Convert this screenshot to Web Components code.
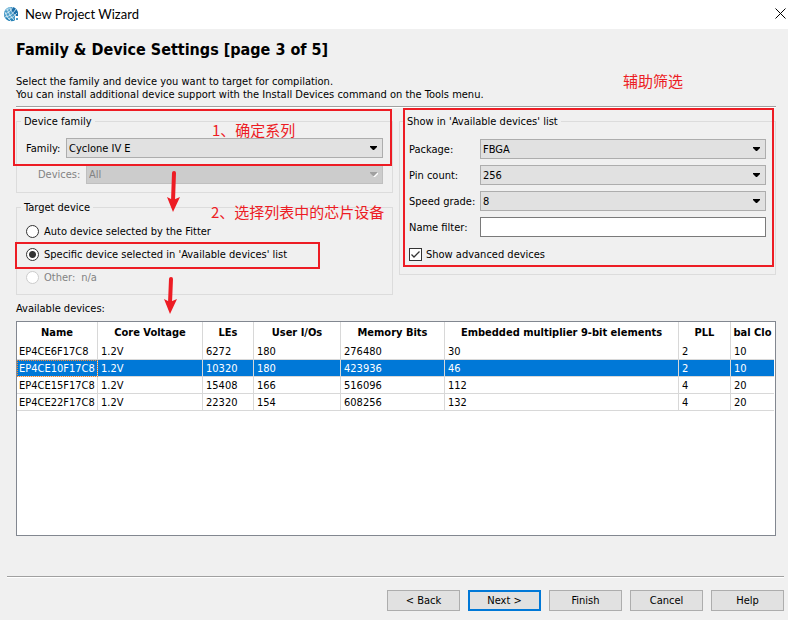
<!DOCTYPE html>
<html lang="en">
<head>
<meta charset="utf-8">
<title>New Project Wizard</title>
<style>
  body {
    margin: 0;
    color: #000;
    background: #f0f0f0;
    font-family: "DejaVu Sans Condensed", "DejaVu Sans", "Noto Sans CJK SC", sans-serif;
    font-size: 11px;
    line-height: 13px;
  }
  .family { --pad-top: 10px; --pad-bottom: 8px; }
  .target { --pad-top: 6px; --pad-bottom: 5px; }
  .filters { --pad-top: 11px; --pad-bottom: 13px; --label-width: 71px; }
  .family-field { --label-width: 40px; }
  .devices-field { --label-width: 48px; margin-left: 12px; }
</style>
</head>
<body>

<wizard-window>
  <title-bar slot="title">New Project Wizard</title-bar>
  <page-header slot="header" heading="Family &amp; Device Settings [page 3 of 5]">
    Select the family and device you want to target for compilation.<br>
    You can install additional device support with the Install Devices command on the Tools menu.
  </page-header>

  <settings-columns>
    <group-box slot="left" legend="Device family" class="family">
      <select-field label="Family:" value="Cyclone IV E" class="family-field"></select-field>
      <select-field label="Devices:" value="All" disabled class="devices-field"></select-field>
    </group-box>
    <group-box slot="left" legend="Target device" class="target">
      <device-choice></device-choice>
    </group-box>
    <group-box slot="right" legend="Show in 'Available devices' list" class="filters">
      <select-field label="Package:" value="FBGA"></select-field>
      <select-field label="Pin count:" value="256"></select-field>
      <select-field label="Speed grade:" value="8"></select-field>
      <text-field label="Name filter:"></text-field>
      <check-field label="Show advanced devices" checked></check-field>
    </group-box>
  </settings-columns>

  <device-table></device-table>
  <wizard-buttons slot="footer"></wizard-buttons>
  <note-layer slot="notes"></note-layer>
</wizard-window>

<script>
class WizardWindow extends HTMLElement {
  constructor() {
    super();
    this.attachShadow({ mode: 'open' });
    this.shadowRoot.innerHTML = `
      <style>
        :host {
          display: flex;
          flex-direction: column;
          position: relative;
          min-height: 100vh;
        }
        main {
          flex: 1;
          display: flex;
          flex-direction: column;
          gap: 7px;
          padding: 11px 12px 40px 16px;
        }
      </style>
      <slot name="title"></slot>
      <main>
        <slot name="header"></slot>
        <slot></slot>
      </main>
      <slot name="footer"></slot>
      <slot name="notes"></slot>
    `;
  }
}

class TitleBar extends HTMLElement {
  constructor() {
    super();
    this.attachShadow({ mode: 'open' });
    this.shadowRoot.innerHTML = `
      <style>
        :host {
          display: flex;
          align-items: center;
          gap: 6px;
          box-sizing: border-box;
          height: 29px;
          padding: 0 1px 2px 4px;
          background: #fff;
          font: 13px/16px Lato, "Noto Sans", sans-serif;
        }
        .text { flex: 1; }
        button {
          display: flex;
          padding: 0 1px;
          border: 0;
          background: none;
        }
      </style>
      <svg width="15" height="16" viewBox="0 0 15 16">
        <path d="M7 1 C11 1 14 4 14 8 L14 10 L11 10 L11 14 C10 15 8 15 7 15 C3 15 0 12 0 8 C0 4 3 1 7 1 Z" fill="#4a9cc9"/>
        <path d="M8 1 C11 1 14 4 14 8 L14 10 L10 10 L7 5 Z" fill="#1b6ea8"/>
        <path d="M0 9 C2 13 6 14 11 13 L11 14 C7 17 1 14 0 9 Z" fill="#2580b5"/>
        <path d="M1 5 Q3 1 7 1 L5 4 Z" fill="#8cc4e0"/>
        <path d="M3 3 Q5 9 10 14 M6 2 Q8 8 12 10 M1 6 Q3 12 7 15 M1 8 Q6 7 9 1 M1 11 Q8 10 12 3 M4 13 Q9 12 13 7" fill="none" stroke="#e2f1f8" stroke-width=".8"/>
        <path d="M12 12 H14 V14 H12 Z" fill="#4a9cc9"/>
      </svg>
      <span class="text"><slot></slot></span>
      <button aria-label="Close">
        <svg width="11" height="11" viewBox="0 0 11 11"><path d="M.5 .5 L10.5 10.5 M10.5 .5 L.5 10.5" stroke="#000" fill="none"/></svg>
      </button>
    `;
  }
}

class PageHeader extends HTMLElement {
  connectedCallback() {
    this.attachShadow({ mode: 'open' });
    this.shadowRoot.innerHTML = `
      <style>
        :host {
          display: block;
          border-bottom: 1px solid #fff;
        }
        h1 {
          margin: 0 0 15px;
          font-size: 16px;
          line-height: 20px;
        }
        p {
          margin: 0;
          padding-bottom: 5px;
          border-bottom: 1px solid #a0a0a0;
        }
      </style>
      <h1>${this.getAttribute('heading')}</h1>
      <p><slot></slot></p>
    `;
  }
}

class SettingsColumns extends HTMLElement {
  constructor() {
    super();
    this.attachShadow({ mode: 'open' });
    this.shadowRoot.innerHTML = `
      <style>
        :host {
          display: grid;
          grid-template-columns: 1fr 1fr;
          align-items: start;
          gap: 6px;
        }
        .column {
          display: flex;
          flex-direction: column;
          gap: 8px;
        }
      </style>
      <div class="column"><slot name="left"></slot></div>
      <div class="column"><slot name="right"></slot></div>
    `;
  }
}

class GroupBox extends HTMLElement {
  connectedCallback() {
    this.attachShadow({ mode: 'open' });
    this.shadowRoot.innerHTML = `
      <style>
        :host { display: block; }
        fieldset {
          min-width: 0;
          margin: 0;
          padding: var(--pad-top) 9px var(--pad-bottom);
          border: 1px solid #dcdcdc;
        }
        legend {
          margin-left: -5px;
          padding: 0 3px;
        }
        .content {
          display: flex;
          flex-direction: column;
          gap: 6px;
        }
      </style>
      <fieldset>
        <legend>${this.getAttribute('legend')}</legend>
        <div class="content"><slot></slot></div>
      </fieldset>
    `;
  }
}

class SelectField extends HTMLElement {
  connectedCallback() {
    const disabled = this.hasAttribute('disabled');
    this.attachShadow({ mode: 'open' });
    this.shadowRoot.innerHTML = `
      <style>
        :host {
          display: flex;
          align-items: center;
          height: 20px;
        }
        :host([disabled]) { color: #838383; }
        label { width: var(--label-width); }
        .box {
          flex: 1;
          display: grid;
          align-items: center;
        }
        select, svg { grid-area: 1 / 1; }
        select {
          appearance: none;
          width: 100%;
          height: 20px;
          padding: 0 20px 0 2px;
          border: 1px solid #adadad;
          border-radius: 0;
          color: inherit;
          background: #e1e1e1;
          font: inherit;
          opacity: 1;
        }
        select:disabled {
          border-color: #bfbfbf;
          background: #ccc;
        }
        svg {
          justify-self: end;
          margin-right: 5px;
          pointer-events: none;
        }
      </style>
      <label for="field">${this.getAttribute('label')}</label>
      <div class="box">
        <select id="field" ${disabled ? 'disabled' : ''}>
          <option>${this.getAttribute('value')}</option>
        </select>
        <svg width="8" height="5" viewBox="0 0 8 5">
          ${disabled ? '<path d="M1 1 H8 V2 L5 5 H4 Z" fill="#fff"/>' : ''}
          <path d="M0 0 H7 V1 L4 4 H3 L0 1 Z" fill="${disabled ? '#a0a0a0' : '#000'}"/>
        </svg>
      </div>
    `;
  }
}

class TextField extends HTMLElement {
  connectedCallback() {
    this.attachShadow({ mode: 'open' });
    this.shadowRoot.innerHTML = `
      <style>
        :host {
          display: flex;
          align-items: center;
          height: 20px;
        }
        label { width: var(--label-width); }
        input {
          flex: 1;
          box-sizing: border-box;
          min-width: 0;
          height: 20px;
          padding: 0 3px;
          border: 1px solid #7a7a7a;
          background: #fff;
          font: inherit;
        }
      </style>
      <label for="field">${this.getAttribute('label')}</label>
      <input id="field" type="text">
    `;
  }
}

class CheckField extends HTMLElement {
  connectedCallback() {
    this.attachShadow({ mode: 'open' });
    this.shadowRoot.innerHTML = `
      <style>
        :host {
          display: flex;
          padding-top: 5px;
        }
        label {
          display: flex;
          align-items: center;
          gap: 4px;
        }
        .box {
          display: grid;
        }
        input, svg { grid-area: 1 / 1; }
        input {
          appearance: none;
          width: 13px;
          height: 13px;
          margin: 0;
          border: 1px solid #333;
          background: #fff;
        }
        svg {
          visibility: hidden;
          pointer-events: none;
        }
        input:checked + svg { visibility: visible; }
      </style>
      <label>
        <span class="box">
          <input type="checkbox" ${this.hasAttribute('checked') ? 'checked' : ''}>
          <svg width="13" height="13" viewBox="0 0 13 13"><path d="M2.5 6.5 L5 9 L10.5 3.5" fill="none" stroke="#333" stroke-width="1.3"/></svg>
        </span>
        ${this.getAttribute('label')}
      </label>
    `;
  }
}

class DeviceChoice extends HTMLElement {
  constructor() {
    super();
    this.attachShadow({ mode: 'open' });
    this.shadowRoot.innerHTML = `
      <style>
        :host { display: block; }
        label {
          display: flex;
          align-items: center;
          gap: 5px;
          height: 23px;
        }
        label.off { color: #838383; }
        input {
          appearance: none;
          width: 13px;
          height: 13px;
          margin: 0;
          border: 1px solid #333;
          border-radius: 50%;
          background: #fff;
        }
        input:checked { background: radial-gradient(circle, #333 3px, #fff 4px); }
        input:disabled { border-color: #ccc; }
        .value { margin-left: 1px; }
      </style>
      <label><input type="radio" name="device">Auto device selected by the Fitter</label>
      <label><input type="radio" name="device" checked>Specific device selected in 'Available devices' list</label>
      <label class="off"><input type="radio" name="device" disabled>Other: <span class="value">n/a</span></label>
    `;
  }
}

class DeviceTable extends HTMLElement {
  constructor() {
    super();
    this.attachShadow({ mode: 'open' });
    this.selected = 1;
    this.columns = [
      ['Name', 81], ['Core Voltage', 105], ['LEs', 51], ['User I/Os', 87],
      ['Memory Bits', 104], ['Embedded multiplier 9-bit elements', 0], ['PLL', 52], ['bal Clo', 43]
    ];
    this.devices = [
      ['EP4CE6F17C8', '1.2V', '6272', '180', '276480', '30', '2', '10'],
      ['EP4CE10F17C8', '1.2V', '10320', '180', '423936', '46', '2', '10'],
      ['EP4CE15F17C8', '1.2V', '15408', '166', '516096', '112', '4', '20'],
      ['EP4CE22F17C8', '1.2V', '22320', '154', '608256', '132', '4', '20']
    ];
  }

  connectedCallback() {
    this.render();
  }

  render() {
    this.shadowRoot.innerHTML = `
      <style>
        :host {
          flex: 1;
          display: flex;
          flex-direction: column;
          gap: 6px;
        }
        .view {
          flex: 1;
          padding-right: 1px;
          border: 1px solid #828790;
          background: #fff;
        }
        table {
          width: 100%;
          table-layout: fixed;
          border-collapse: separate;
          border-spacing: 0;
        }
        th, td {
          box-sizing: border-box;
          padding: 0;
          overflow: hidden;
          white-space: nowrap;
          border-right: 1px solid #d8d8d8;
        }
        th:last-child, td:last-child { border-right: 0; }
        th { height: 21px; }
        td {
          height: 17px;
          padding-left: 3px;
          border-bottom: 1px solid #d8d8d8;
        }
        td:first-child { padding-left: 2px; }
        .selected td {
          color: #fff;
          background: #0078d7;
        }
        .selected td:first-child {
          outline: 1px dotted #ff8728;
          outline-offset: -1px;
        }
      </style>
      <div id="caption">Available devices:</div>
      <div class="view">
        <table aria-labelledby="caption">
          <colgroup>
            ${this.columns.map(([, width]) => `<col${width ? ` style="width: ${width}px"` : ''}>`).join('')}
          </colgroup>
          <thead>
            <tr>${this.columns.map(([name]) => `<th>${name}</th>`).join('')}</tr>
          </thead>
          <tbody>
            ${this.devices.map((device, i) => `
              <tr class="${i === this.selected ? 'selected' : ''}">
                ${device.map(value => `<td>${value}</td>`).join('')}
              </tr>
            `).join('')}
          </tbody>
        </table>
      </div>
    `;
  }
}

class WizardButtons extends HTMLElement {
  constructor() {
    super();
    this.attachShadow({ mode: 'open' });
    this.shadowRoot.innerHTML = `
      <style>
        :host {
          display: block;
          margin: 0 4px 9px 7px;
          border-top: 1px solid #a0a0a0;
        }
        div {
          display: flex;
          justify-content: flex-end;
          gap: 8px;
          padding-top: 12px;
          border-top: 1px solid #fff;
        }
        button {
          width: 73px;
          height: 21px;
          padding: 0;
          border: 1px solid #adadad;
          color: inherit;
          background: #e1e1e1;
          font: inherit;
        }
        .default { border: 2px solid #0078d7; }
      </style>
      <div>
        <button>&lt; Back</button>
        <button class="default">Next &gt;</button>
        <button>Finish</button>
        <button>Cancel</button>
        <button>Help</button>
      </div>
    `;
  }
}

// red marks that lie over the dialog
class NoteLayer extends HTMLElement {
  constructor() {
    super();
    this.attachShadow({ mode: 'open' });
    this.shadowRoot.innerHTML = `
      <style>
        :host {
          position: absolute;
          inset: 0;
          pointer-events: none;
          color: #ed1c24;
          font: 15px/20px "Noto Sans CJK SC", sans-serif;
        }
        svg, span { position: absolute; }
        svg {
          left: 0;
          top: 0;
        }
        .family { left: 212px; top: 120px; }
        .target { left: 211px; top: 202px; }
        .filter { left: 623px; top: 71px; }
      </style>
      <svg width="788" height="330" viewBox="0 0 788 330" fill="none" stroke="#ed1c24" stroke-width="2">
        <rect x="14" y="110" width="377" height="55"/>
        <rect x="404" y="109" width="369" height="157"/>
        <rect x="16" y="243" width="303" height="25"/>
        <g stroke-width="4" stroke-linecap="round">
          <path d="M174 173 L173 201"/>
          <path d="M171 279 L170 303"/>
        </g>
        <path d="M167 197 L173 200 L180 197 L173 212 Z M164 299 L170 302 L177 299 L170 314 Z" fill="#ed1c24" stroke="none"/>
      </svg>
      <span class="family">1、确定系列</span>
      <span class="target">2、选择列表中的芯片设备</span>
      <span class="filter">辅助筛选</span>
    `;
  }
}

customElements.define('wizard-window', WizardWindow);
customElements.define('title-bar', TitleBar);
customElements.define('page-header', PageHeader);
customElements.define('settings-columns', SettingsColumns);
customElements.define('group-box', GroupBox);
customElements.define('select-field', SelectField);
customElements.define('text-field', TextField);
customElements.define('check-field', CheckField);
customElements.define('device-choice', DeviceChoice);
customElements.define('device-table', DeviceTable);
customElements.define('wizard-buttons', WizardButtons);
customElements.define('note-layer', NoteLayer);
</script>
</body>
</html>
